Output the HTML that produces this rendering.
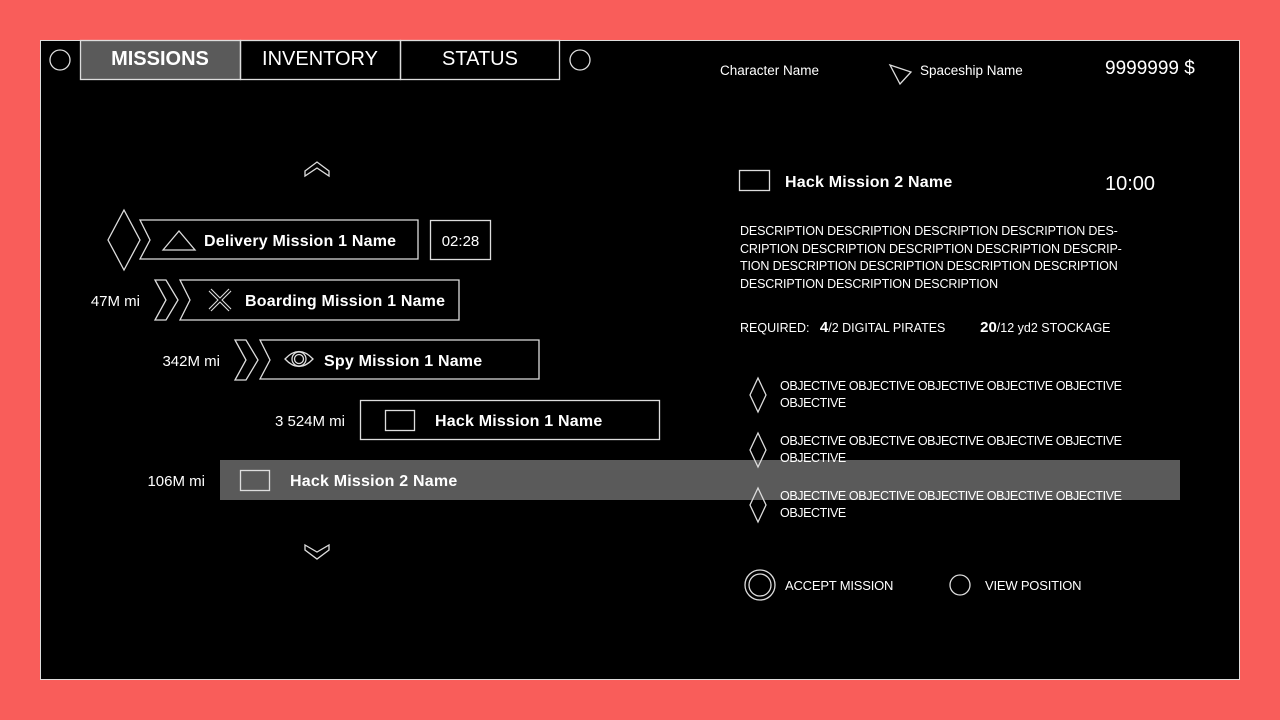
<!DOCTYPE html>
<html><head><meta charset="utf-8"><style>
html,body{margin:0;padding:0;}
body{width:1280px;height:720px;background:#f95d5a;position:relative;overflow:hidden;font-family:"Liberation Sans","DejaVu Sans",sans-serif;color:#fff;}
#scr{position:absolute;left:40px;top:40px;width:1198px;height:638px;background:#000;border:1px solid #ddd;}
svg{position:absolute;left:0;top:0;}
.t{position:absolute;white-space:nowrap;line-height:1;}
.b{font-weight:bold;}
</style></head><body>
<div id="scr"></div>
<svg width="1280" height="720" fill="none" stroke="#ddd" stroke-width="1.3">
<rect x="220" y="460" width="960" height="40" fill="#5a5a5a" stroke="none"/>
<circle cx="60" cy="60" r="10"/><circle cx="580" cy="60" r="10"/>
<rect x="80.5" y="40.5" width="160" height="39" fill="#5a5a5a"/>
<rect x="240.5" y="40.5" width="160" height="39"/>
<rect x="400.5" y="40.5" width="159" height="39"/>
<path d="M305 171 L317 162 L329 171 L329 176 L317 168 L305 176 Z"/>
<path d="M305 545 L317 552 L329 545 L329 550 L317 559 L305 550 Z"/>
<path d="M124 210 L140 240 L124 270 L108 240 Z"/>
<path d="M140 220 L418 220 L418 259 L140 259 L150 240 Z"/>
<path d="M163 250 L179 231 L195 250 Z"/>
<rect x="430.5" y="220.5" width="60" height="39"/>
<path d="M155 280 L166 280 L178 300 L166 320 L155 320 L166 300 Z"/>
<path d="M180 280 L459 280 L459 320 L180 320 L190 300 Z"/>
<path d="M210 290 L230 310 M230 290 L210 310" stroke-width="4"/>
<path d="M210 290 L230 310 M230 290 L210 310" stroke="#000" stroke-width="1.8"/>
<path d="M235 340 L246 340 L258 360 L246 380 L235 380 L246 360 Z"/>
<path d="M260 340 L539 340 L539 379 L260 379 L270 360 Z"/>
<path d="M285 359 Q299 344 313 359 Q299 374 285 359 Z"/>
<circle cx="299" cy="359" r="7"/><circle cx="299" cy="359" r="4.5"/>
<rect x="360.5" y="400.5" width="299" height="39"/>
<rect x="385.5" y="410.5" width="29" height="20"/>
<rect x="240.5" y="470.5" width="29" height="20"/>
<path d="M890 65 L911 72 L900 84 Z"/>
<rect x="739.5" y="170.5" width="30" height="20"/>
<path d="M758 378 L766 395 L758 412 L750 395 Z"/>
<path d="M758 433 L766 450 L758 467 L750 450 Z"/>
<path d="M758 488 L766 505 L758 522 L750 505 Z"/>
<circle cx="760" cy="585" r="15"/><circle cx="760" cy="585" r="11"/>
<circle cx="960" cy="585" r="10"/>
</svg>
<div class="t b" style="left:80px;width:160px;text-align:center;top:49px;font-size:20px;">MISSIONS</div>
<div class="t" style="left:240px;width:160px;text-align:center;top:49px;font-size:20px;">INVENTORY</div>
<div class="t" style="left:400px;width:160px;text-align:center;top:49px;font-size:20px;">STATUS</div>
<div class="t b" style="left:204px;top:234px;font-size:16px;letter-spacing:0.2px;">Delivery Mission 1 Name</div>
<div class="t" style="left:430px;width:61px;text-align:center;top:234px;font-size:15px;">02:28</div>
<div class="t" style="right:1140px;top:294px;font-size:15px;">47M mi</div>
<div class="t b" style="left:245px;top:294px;font-size:16px;letter-spacing:0.2px;">Boarding Mission 1 Name</div>
<div class="t" style="right:1060px;top:354px;font-size:15px;">342M mi</div>
<div class="t b" style="left:324px;top:354px;font-size:16px;letter-spacing:0.2px;">Spy Mission 1 Name</div>
<div class="t" style="right:935px;top:414px;font-size:15px;">3 524M mi</div>
<div class="t b" style="left:435px;top:414px;font-size:16px;letter-spacing:0.2px;">Hack Mission 1 Name</div>
<div class="t" style="right:1075px;top:474px;font-size:15px;">106M mi</div>
<div class="t b" style="left:290px;top:474px;font-size:16px;letter-spacing:0.2px;">Hack Mission 2 Name</div>
<div class="t" style="left:720px;top:64px;font-size:13.5px;">Character Name</div>
<div class="t" style="left:920px;top:64px;font-size:13.5px;">Spaceship Name</div>
<div class="t" style="left:1105px;top:59px;font-size:19px;">9999999 $</div>
<div class="t b" style="left:785px;top:175px;font-size:16px;letter-spacing:0.2px;">Hack Mission 2 Name</div>
<div class="t" style="left:1105px;top:174px;font-size:20px;">10:00</div>
<div class="t" style="left:740px;top:223px;font-size:12.5px;line-height:17.5px;letter-spacing:-0.15px;">DESCRIPTION DESCRIPTION DESCRIPTION DESCRIPTION DES-<br>CRIPTION DESCRIPTION DESCRIPTION DESCRIPTION DESCRIP-<br>TION DESCRIPTION DESCRIPTION DESCRIPTION DESCRIPTION<br>DESCRIPTION DESCRIPTION DESCRIPTION</div>
<div class="t" style="left:740px;top:320px;font-size:12.5px;">REQUIRED:&nbsp;&nbsp;&nbsp;<b style="font-size:15px">4</b>/2 DIGITAL PIRATES&nbsp;&nbsp;&nbsp;&nbsp;&nbsp;&nbsp;&nbsp;&nbsp;&nbsp;&nbsp;<b style="font-size:15px">20</b>/12 yd2 STOCKAGE</div>
<div class="t" style="left:780px;top:378px;font-size:12.5px;line-height:16.5px;letter-spacing:-0.4px;">OBJECTIVE OBJECTIVE OBJECTIVE OBJECTIVE OBJECTIVE<br>OBJECTIVE</div>
<div class="t" style="left:780px;top:433px;font-size:12.5px;line-height:16.5px;letter-spacing:-0.4px;">OBJECTIVE OBJECTIVE OBJECTIVE OBJECTIVE OBJECTIVE<br>OBJECTIVE</div>
<div class="t" style="left:780px;top:488px;font-size:12.5px;line-height:16.5px;letter-spacing:-0.4px;">OBJECTIVE OBJECTIVE OBJECTIVE OBJECTIVE OBJECTIVE<br>OBJECTIVE</div>
<div class="t" style="left:785px;top:579px;font-size:13px;letter-spacing:-0.2px;">ACCEPT MISSION</div>
<div class="t" style="left:985px;top:579px;font-size:13px;letter-spacing:-0.2px;">VIEW POSITION</div>
</body></html>
